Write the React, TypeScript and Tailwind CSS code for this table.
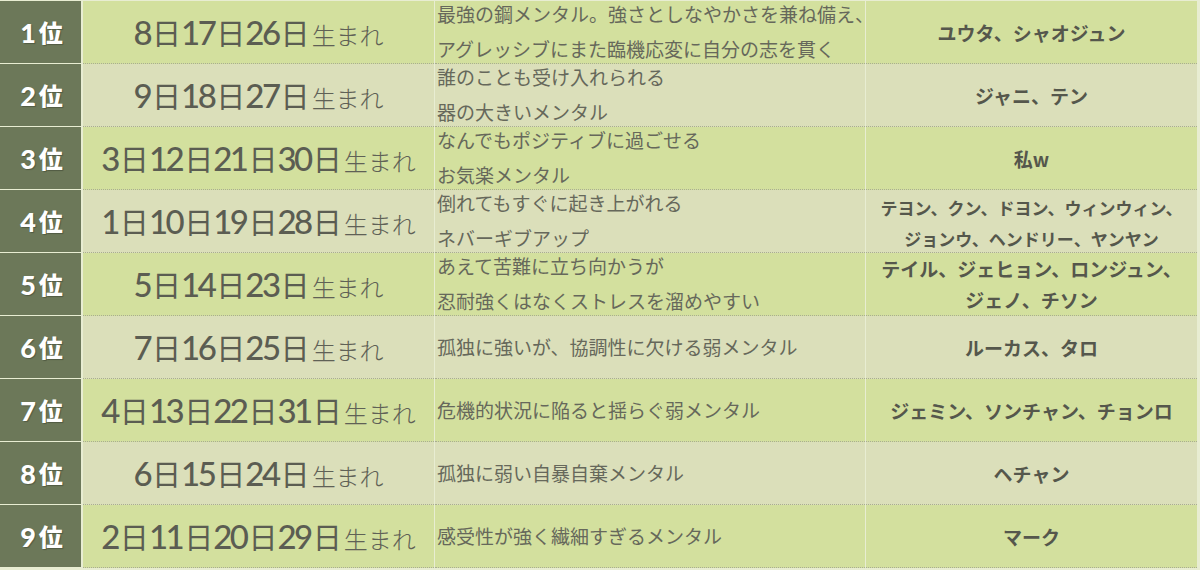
import React from "react";

type Row = {
  rank: string;
  dates: string;
  desc: string[];
  names: string[];
  nameSize?: string;
};

const rows: Row[] = [
  { rank: "1", dates: "8日17日26日", desc: ["最強の鋼メンタル。強さとしなやかさを兼ね備え、", "アグレッシブにまた臨機応変に自分の志を貫く"], names: ["ユウタ、シャオジュン"] },
  { rank: "2", dates: "9日18日27日", desc: ["誰のことも受け入れられる", "器の大きいメンタル"], names: ["ジャニ、テン"] },
  { rank: "3", dates: "3日12日21日30日", desc: ["なんでもポジティブに過ごせる", "お気楽メンタル"], names: ["私w"] },
  { rank: "4", dates: "1日10日19日28日", desc: ["倒れてもすぐに起き上がれる", "ネバーギブアップ"], names: ["テヨン、クン、ドヨン、ウィンウィン、", "ジョンウ、ヘンドリー、ヤンヤン"], nameSize: "small" },
  { rank: "5", dates: "5日14日23日", desc: ["あえて苦難に立ち向かうが", "忍耐強くはなくストレスを溜めやすい"], names: ["テイル、ジェヒョン、ロンジュン、", "ジェノ、チソン"] },
  { rank: "6", dates: "7日16日25日", desc: ["孤独に強いが、協調性に欠ける弱メンタル"], names: ["ルーカス、タロ"] },
  { rank: "7", dates: "4日13日22日31日", desc: ["危機的状況に陥ると揺らぐ弱メンタル"], names: ["ジェミン、ソンチャン、チョンロ"] },
  { rank: "8", dates: "6日15日24日", desc: ["孤独に弱い自暴自棄メンタル"], names: ["ヘチャン"] },
  { rank: "9", dates: "2日11日20日29日", desc: ["感受性が強く繊細すぎるメンタル"], names: ["マーク"] },
];

const cjk = "font-['Noto_Sans_CJK_JP',sans-serif]";

function Dates({ text }: { text: string }) {
  const parts = text.match(/\d+|日/g) || [];
  return (
    <div className="flex items-baseline text-[#5b5d52]">
      {parts.map((p, i) =>
        p === "日" ? (
          <span key={i} className={`${cjk} text-[29px] leading-none font-normal`}>日</span>
        ) : (
          <span key={i} className="font-['Lato',sans-serif] text-[33px] leading-none font-medium tracking-[-2.5px] mr-[2px]">{p}</span>
        )
      )}
      <span className={`${cjk} text-[24px] leading-none font-light ml-[2px] text-[#5f6156]`}>生まれ</span>
    </div>
  );
}

export default function App() {
  return (
    <div className="w-[1200px] h-[570px] bg-[#e8edd2] pt-px pr-[3px] pb-[2px] flex flex-col overflow-hidden">
      {rows.map((r, idx) => {
        const bg = idx % 2 === 0 ? "bg-[#d3e09e]" : "bg-[#dbdfba]";
        return (
          <div key={idx} className="flex h-[63px]">
            <div className="w-[81px] h-[62px] bg-[#6c7859] flex items-center justify-center text-white pl-[2px]">
              <span className="font-['Lato',sans-serif] font-black text-[27px] leading-none mr-[3px] mt-[1px] [text-shadow:1px_1px_1px_rgba(0,0,0,0.25)]">{r.rank}</span>
              <span className={`${cjk} font-black text-[24px] leading-none [text-shadow:1px_1px_1px_rgba(0,0,0,0.25)]`}>位</span>
            </div>
            <div className={`w-[351px] ml-[2px] h-[63px] ${bg} border-b border-dotted border-[#a9ad92] flex items-center justify-center`}>
              <Dates text={r.dates} />
            </div>
            <div className={`w-[430px] ml-px h-[63px] ${bg} border-b border-dotted border-[#a9ad92] pl-[2px] ${cjk} text-[19px] text-[#66685b] flex flex-col ${r.desc.length === 1 ? "justify-center" : "pt-[3px]"}`}>
              {r.desc.length === 1 ? (
                <div className="leading-[20px] whitespace-nowrap">{r.desc[0]}</div>
              ) : (
                <>
                  <div className="leading-[20px] whitespace-nowrap">{r.desc[0]}</div>
                  <div className="leading-[20px] mt-[15px] whitespace-nowrap">{r.desc[1]}</div>
                </>
              )}
            </div>
            <div className={`flex-1 ml-px h-[63px] ${bg} border-b border-dotted border-[#a9ad92] flex flex-col items-center justify-center ${cjk} font-bold text-[#55574c] ${r.nameSize === "small" ? "text-[17px] leading-[31px] pt-[3px]" : "text-[19px] leading-[31px]"}`}>
              {r.names.map((n, i) => (
                <div key={i} className="whitespace-nowrap">{n}</div>
              ))}
            </div>
          </div>
        );
      })}
    </div>
  );
}
